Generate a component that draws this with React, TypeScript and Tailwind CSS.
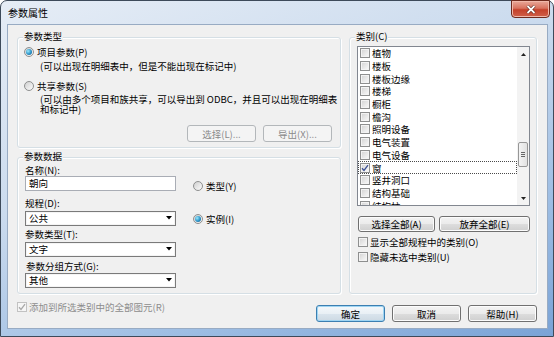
import type { ReactNode } from "react";

const categories = [
  "植物",
  "楼板",
  "楼板边缘",
  "楼梯",
  "橱柜",
  "檐沟",
  "照明设备",
  "电气装置",
  "电气设备",
  "窗",
  "竖井洞口",
  "结构基础",
  "结构柱",
];

function CheckBox({ checked = false, disabled = false }: { checked?: boolean; disabled?: boolean }) {
  return (
    <span
      className={`flex h-[10px] w-[10px] shrink-0 items-center justify-center border ${
        disabled
          ? "border-[#c2c2c2] bg-[#f6f6f6]"
          : "border-[#8e8f8f] bg-[linear-gradient(135deg,#d2d2d2,#fbfbfb)] shadow-[inset_0_0_0_1px_#f3f3f3]"
      }`}
    >
      {checked ? (
        <svg width="8" height="8" viewBox="0 0 8 8">
          <path
            d="M1 4.3 L3 6.4 L7 1.2"
            fill="none"
            stroke={disabled ? "#a8a8a8" : "#3b4f91"}
            strokeWidth="1.3"
          />
        </svg>
      ) : null}
    </span>
  );
}

function Radio({ checked = false }: { checked?: boolean }) {
  return (
    <span className="flex h-[10px] w-[10px] shrink-0 items-center justify-center rounded-full border border-[#8e8f8f] bg-[linear-gradient(135deg,#cfcfcf,#fcfcfc)]">
      {checked ? (
        <span className="h-[6px] w-[6px] rounded-full bg-[radial-gradient(circle_at_35%_35%,#9be8fc,#2a93c8_55%,#1b5682)]" />
      ) : null}
    </span>
  );
}

function GroupBox({ label, className, children }: { label: string; className: string; children: ReactNode }) {
  return (
    <div className={`relative rounded-[3px] border border-[#d5dfe5] shadow-[inset_1px_1px_0_#fff,1px_1px_0_#fff] ${className}`}>
      <span className="absolute -top-[8px] left-[5px] bg-[#f0f0f0] px-[1px] leading-[12px]">{label}</span>
      {children}
    </div>
  );
}

function WinButton({
  children,
  className,
  disabled = false,
  focused = false,
}: {
  children: ReactNode;
  className: string;
  disabled?: boolean;
  focused?: boolean;
}) {
  let tone =
    "border-[#707070] bg-[linear-gradient(#f3f3f3_0%,#ebebeb_50%,#dddddd_51%,#cfcfcf_100%)] shadow-[inset_0_0_0_1px_#fcfcfc]";
  if (disabled) tone = "border-[#b3b7ba] bg-[#f4f4f4] text-[#8a8a8a]";
  if (focused)
    tone =
      "border-[#3c7fb1] bg-[linear-gradient(#f4f8fb_0%,#e9f0f5_50%,#dae5ee_51%,#cdd9e3_100%)] shadow-[inset_0_0_0_1px_#9fd5f3]";
  return (
    <div className={`flex items-center justify-center rounded-[3px] border leading-[12px] ${tone} ${className}`}>
      {children}
    </div>
  );
}

function DropArrow() {
  return (
    <svg width="6" height="4" viewBox="0 0 6 4" className="mr-[3px]">
      <path d="M0 0 H6 L3 3.5 Z" fill="#000" />
    </svg>
  );
}

function Select({ value }: { value: string }) {
  return (
    <div className="flex h-[15px] w-[151px] items-center justify-between border border-[#7a7a7a] bg-white pl-[3px] leading-[12px] shadow-[inset_0_0_0_1px_#f4f4f4]">
      <span>{value}</span>
      <DropArrow />
    </div>
  );
}

function CategoryList() {
  return (
    <div className="flex h-[160px] w-[173px] overflow-hidden border border-[#828790] bg-white">
      <div className="flex w-[159px] flex-col">
        {categories.map((name) => (
          <div
            key={name}
            className={`flex h-[12.7px] shrink-0 items-center gap-[2px] pl-[2px] leading-[12px] ${
              name === "窗" ? "outline-1 -outline-offset-1 outline-dotted outline-[#4a4a4a]" : ""
            }`}
          >
            <CheckBox checked={name === "窗"} />
            <span>{name}</span>
          </div>
        ))}
      </div>
      <div className="flex w-[12px] flex-col bg-[#f3f3f3]">
        <div className="flex h-[14px] items-center justify-center">
          <svg width="5" height="3" viewBox="0 0 5 3">
            <path d="M0 3 H5 L2.5 0 Z" fill="#222" />
          </svg>
        </div>
        <div className="flex-1">
          <div className="ml-[1px] mt-[81px] flex h-[25px] w-[10px] flex-col items-center justify-center gap-[1px] rounded-[2px] border border-[#979797] bg-[linear-gradient(90deg,#f4f4f4,#e2e2e2)]">
            <span className="h-px w-[4px] bg-[#666]" />
            <span className="h-px w-[4px] bg-[#666]" />
            <span className="h-px w-[4px] bg-[#666]" />
          </div>
        </div>
        <div className="flex h-[14px] items-center justify-center">
          <svg width="5" height="3" viewBox="0 0 5 3">
            <path d="M0 0 H5 L2.5 3 Z" fill="#222" />
          </svg>
        </div>
      </div>
    </div>
  );
}

export default function App() {
  return (
    <div className="h-[337px] w-[554px] overflow-hidden bg-white font-['Noto_Sans_CJK_SC',sans-serif] text-[9.5px] text-black">
      <div className="flex h-full w-full flex-col rounded-t-[7px] border border-[#3d4a5a] bg-[linear-gradient(160deg,#e6edf6_0%,#cbdbee_40%,#9dbde3_75%,#7aa3d6_100%)]">
        <div className="flex h-[23px] items-start">
          <span className="pl-[7px] pt-[6px] text-[10px] leading-[12px]">参数属性</span>
          <div className="ml-auto mr-[3px] -mt-px flex h-[18px] w-[39px] items-center justify-center rounded-b-[4px] border border-[#6e2a1d] bg-[linear-gradient(#e9a99a_0%,#d8735f_45%,#c4412a_55%,#d0604a_100%)] shadow-[inset_0_0_0_1px_#f0b8aa]">
            <svg width="10" height="9" viewBox="0 0 10 9">
              <path d="M1.5 1 L8.5 8 M8.5 1 L1.5 8" stroke="#4a1a12" strokeWidth="3" />
              <path d="M1.5 1 L8.5 8 M8.5 1 L1.5 8" stroke="#fff" strokeWidth="1.8" />
            </svg>
          </div>
        </div>

        <div className="ml-[6px] mr-[5px] flex h-[305px] w-[541px] flex-col border border-[#98abc3] bg-[#f0f0f0] pl-[9px] pr-[10px] pt-[12px]">
          <div className="flex h-[257px] gap-[8px]">
            <div className="flex w-[324px] flex-col">
              <GroupBox label="参数类型" className="h-[111px]">
                <div className="flex flex-col pl-[6px] pt-[8px]">
                  <div className="flex h-[12px] items-center gap-[3px] leading-[12px]">
                    <Radio checked />
                    <span>项目参数(P)</span>
                  </div>
                  <div className="mt-[2px] h-[12px] whitespace-nowrap pl-[16px] leading-[12px]">
                    (可以出现在明细表中，但是不能出现在标记中)
                  </div>
                  <div className="mt-[8px] flex h-[12px] items-center gap-[3px] leading-[12px]">
                    <Radio />
                    <span>共享参数(S)</span>
                  </div>
                  <div className="mt-[2px] whitespace-nowrap pl-[16px] leading-[10px]">
                    (可以由多个项目和族共享，可以导出到 ODBC，并且可以出现在明细表
                    <br />
                    和标记中)
                  </div>
                  <div className="mt-[11px] flex justify-end gap-[7px] pr-[8px]">
                    <WinButton disabled className="h-[17px] w-[69px]">
                      选择(L)...
                    </WinButton>
                    <WinButton disabled className="h-[17px] w-[69px]">
                      导出(X)...
                    </WinButton>
                  </div>
                </div>
              </GroupBox>

              <GroupBox label="参数数据" className="mt-[9px] h-[138px]">
                <div className="flex flex-col pl-[7px] pt-[6px] leading-[12px]">
                  <div className="h-[12px]">名称(N):</div>
                  <div className="flex items-start">
                    <div className="flex h-[15px] w-[151px] items-center border border-[#a9adb5] bg-white pl-[3px]">
                      朝向
                    </div>
                    <div className="ml-[17px] mt-[4px] flex h-[12px] items-center gap-[3px]">
                      <Radio />
                      <span>类型(Y)</span>
                    </div>
                  </div>
                  <div className="mt-[5px] h-[12px]">规程(D):</div>
                  <div className="mt-[2px] flex items-start">
                    <Select value="公共" />
                    <div className="ml-[17px] mt-[2px] flex h-[12px] items-center gap-[3px]">
                      <Radio checked />
                      <span>实例(I)</span>
                    </div>
                  </div>
                  <div className="mt-[2px] h-[12px]">参数类型(T):</div>
                  <div className="mt-[2px]">
                    <Select value="文字" />
                  </div>
                  <div className="mt-[3px] h-[12px] pl-[1px]">参数分组方式(G):</div>
                  <div className="mt-[1px]">
                    <Select value="其他" />
                  </div>
                </div>
              </GroupBox>
            </div>

            <GroupBox label="类别(C)" className="h-[257px] w-[188px]">
              <div className="flex flex-col pl-[7px] pt-[8px] leading-[12px]">
                <CategoryList />
                <div className="mt-[10px] flex gap-[4px] pl-[1px]">
                  <WinButton className="h-[16px] w-[77px]">选择全部(A)</WinButton>
                  <WinButton className="h-[16px] w-[91px]">放弃全部(E)</WinButton>
                </div>
                <div className="mt-[4px] flex h-[12px] items-center gap-[2px] pl-[1px]">
                  <CheckBox />
                  <span>显示全部规程中的类别(O)</span>
                </div>
                <div className="mt-[3px] flex h-[12px] items-center gap-[2px] pl-[1px]">
                  <CheckBox />
                  <span>隐藏未选中类别(U)</span>
                </div>
              </div>
            </GroupBox>
          </div>

          <div className="flex">
            <div className="mt-[7px] flex h-[12px] items-center gap-[2px] leading-[12px] text-[#8d8d8d]">
              <CheckBox checked disabled />
              <span>添加到所选类别中的全部图元(R)</span>
            </div>
            <div className="ml-auto mt-[11px] flex gap-[7px]">
              <WinButton focused className="h-[17px] w-[69px]">
                确定
              </WinButton>
              <WinButton className="h-[17px] w-[69px]">取消</WinButton>
              <WinButton className="h-[17px] w-[69px]">帮助(H)</WinButton>
            </div>
          </div>
        </div>
      </div>
    </div>
  );
}
